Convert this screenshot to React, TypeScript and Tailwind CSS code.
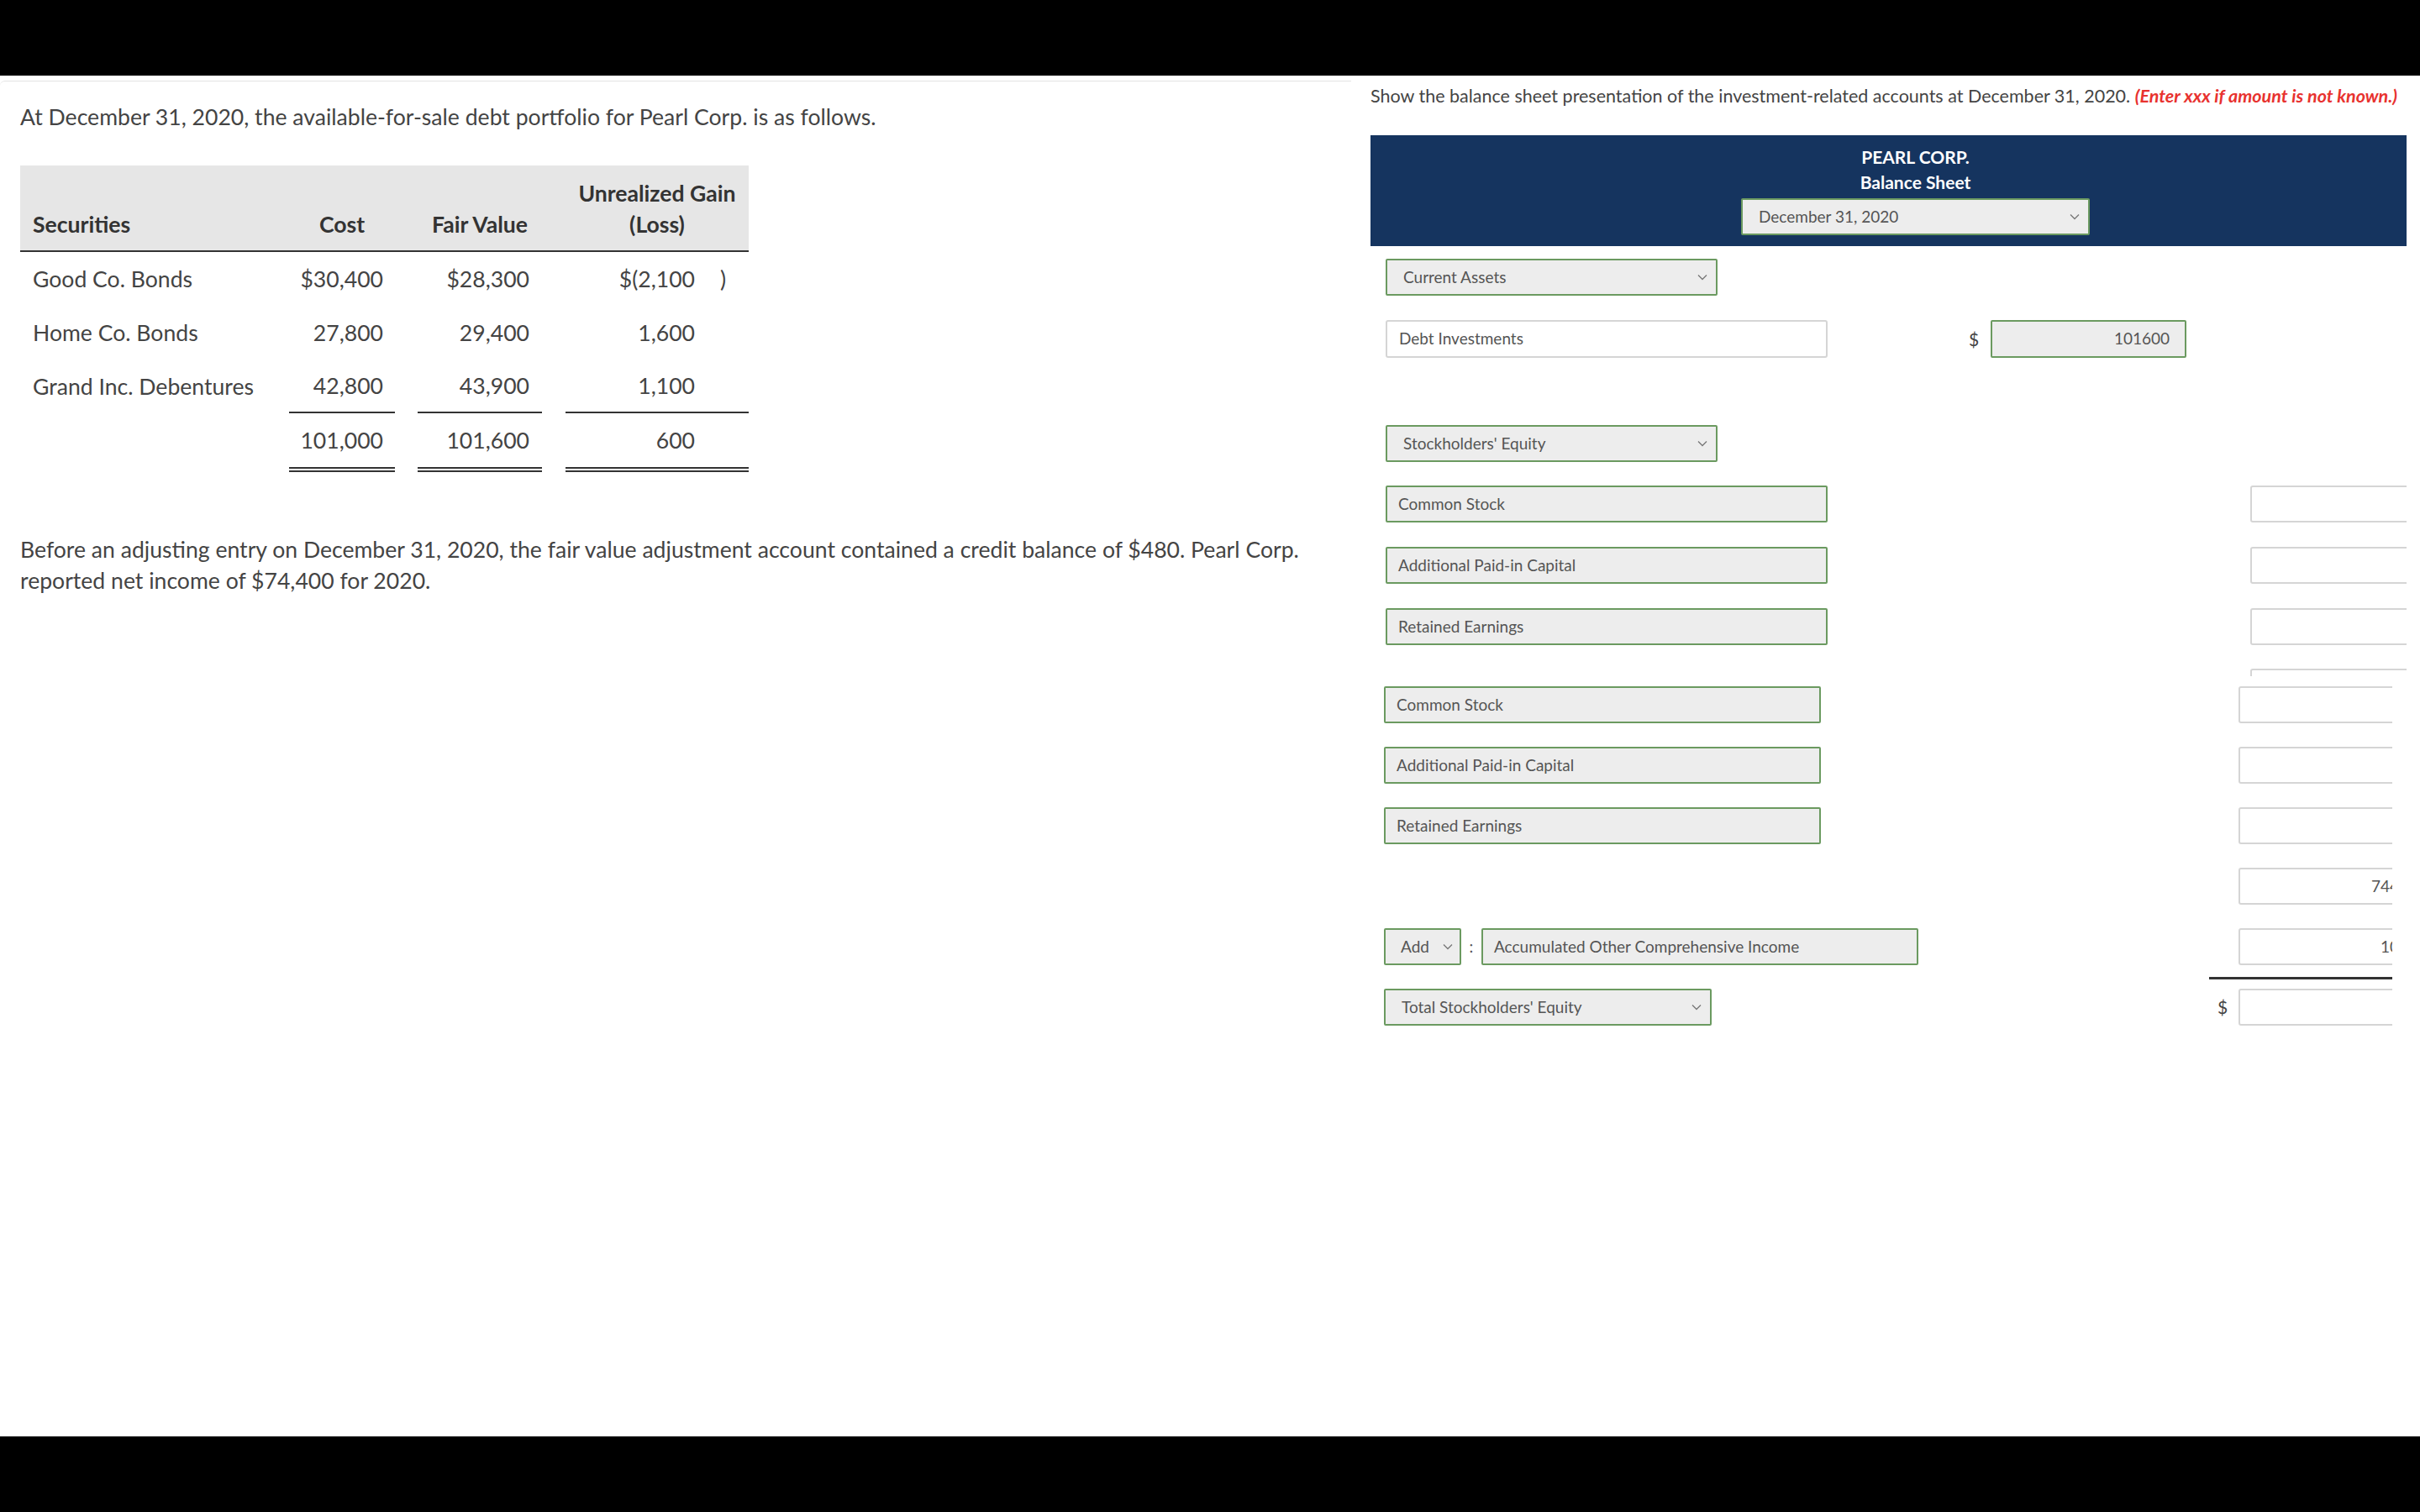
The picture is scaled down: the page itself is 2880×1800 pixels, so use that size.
import React from 'react'

const rows = [
  { name: 'Good Co. Bonds', cost: '$30,400', fair: '$28,300', gain: '$(2,100', paren: ')' },
  { name: 'Home Co. Bonds', cost: '27,800', fair: '29,400', gain: '1,600', paren: '' },
  { name: 'Grand Inc. Debentures', cost: '42,800', fair: '43,900', gain: '1,100', paren: '' },
]

function Chevron() {
  return (
    <svg width="12" height="8" viewBox="0 0 12 8" className="shrink-0">
      <polyline points="1,1.5 6,6.5 11,1.5" fill="none" stroke="#777" strokeWidth="1.3" />
    </svg>
  )
}

function Select({ label, className }: { label: string; className: string }) {
  return (
    <div className={`h-[44px] flex items-center justify-between pl-[19px] pr-[10px] bg-[#ededed] border-2 border-[#6b9a60] rounded-[2px] text-[19px] text-[#555] ${className}`}>
      <span>{label}</span>
      <Chevron />
    </div>
  )
}

function Label({ label, className }: { label: string; className: string }) {
  return (
    <div className={`h-[44px] flex items-center pl-[13px] bg-[#ededed] border-2 border-[#6b9a60] rounded-[2px] text-[19px] text-[#555] ${className}`}>
      {label}
    </div>
  )
}

function Amount({ value = '', className = '' }: { value?: string; className?: string }) {
  return (
    <div className={`h-[44px] w-[233px] shrink-0 flex items-center justify-end pr-[18px] bg-white border-2 border-[#d5d5d5] rounded-[3px] text-[19px] text-[#555] ${className}`}>
      {value}
    </div>
  )
}

function LeftPanel() {
  return (
    <div className="w-[1608px] shrink-0 mt-[6px] border-t border-[#e3e3e3] rounded-tl-[6px] pl-[24px] pt-[24px] text-[26.6px] leading-[37px] text-[#444]">
      <p>At December 31, 2020, the available-for-sale debt portfolio for Pearl Corp. is as follows.</p>

      <div className="mt-[39px] w-[867px]">
        <div className="grid grid-cols-[320px_126px_27px_148px_28px_218px] h-[103px] bg-[#e6e6e6] border-b-2 border-[#333] font-bold text-[#333] items-end pb-[12px]">
          <div className="pl-[15px]">Securities</div>
          <div className="text-center">Cost</div>
          <div />
          <div className="text-center">Fair Value</div>
          <div />
          <div className="text-center">Unrealized Gain<br />(Loss)</div>
        </div>

        {rows.map((r, i) => (
          <div key={r.name} className="grid grid-cols-[320px_126px_27px_148px_28px_218px] h-[64px]">
            <div className="pl-[15px] flex items-center whitespace-nowrap">{r.name}</div>
            <div className={`flex items-center justify-end pr-[14px] ${i === 2 ? 'border-b-2 border-[#333]' : ''}`}>{r.cost}</div>
            <div />
            <div className={`flex items-center justify-end pr-[15px] ${i === 2 ? 'border-b-2 border-[#333]' : ''}`}>{r.fair}</div>
            <div />
            <div className={`flex items-center justify-end pr-[27px] ${i === 2 ? 'border-b-2 border-[#333]' : ''}`}>
              <span>{r.gain}</span>
              <span className="w-[37px] text-right">{r.paren}</span>
            </div>
          </div>
        ))}

        <div className="grid grid-cols-[320px_126px_27px_148px_28px_218px] h-[70px]">
          <div />
          <div className="flex items-center justify-end pr-[14px] border-b-[6px] border-double border-[#333]">101,000</div>
          <div />
          <div className="flex items-center justify-end pr-[15px] border-b-[6px] border-double border-[#333]">101,600</div>
          <div />
          <div className="flex items-center justify-end pr-[64px] border-b-[6px] border-double border-[#333]">600</div>
        </div>
      </div>

      <p className="mt-[74px] pr-[24px]">
        Before an adjusting entry on December 31, 2020, the fair value adjustment account contained a credit balance of $480. Pearl Corp. reported net income of $74,400 for 2020.
      </p>
    </div>
  )
}

function RightPanel() {
  return (
    <div className="w-[1256px] shrink-0 pl-[23px] pt-[9px] overflow-hidden">
      <p className="text-[21.5px] leading-[30px] text-[#444] whitespace-nowrap">
        Show the balance sheet presentation of the investment-related accounts at December 31, 2020.{' '}
        <span className="font-bold italic text-[#e8322f]">(Enter xxx if amount is not known.)</span>
      </p>

      <div className="mt-[32px] w-[1233px] h-[132px] bg-[#15345f] pl-[64px] pt-[11px] flex flex-col items-center">
        <div className="text-white font-bold text-[21px] leading-[30px]">PEARL CORP.</div>
        <div className="text-white font-bold text-[21px] leading-[30px]">Balance Sheet</div>
        <Select label="December 31, 2020" className="w-[415px] mt-[4px]" />
      </div>

      {/* first block: assets and equity captions */}
      <div className="w-[1233px] h-[512px] overflow-hidden pl-[18px]">
        <Select label="Current Assets" className="w-[395px] mt-[15px]" />

        <div className="flex items-center mt-[29px]">
          <div className="h-[45px] w-[526px] shrink-0 flex items-center pl-[14px] bg-white border-2 border-[#d5d5d5] rounded-[3px] text-[19px] text-[#555]">
            Debt Investments
          </div>
          <span className="ml-[168px] w-[26px] shrink-0 text-[21px] text-[#444]">$</span>
          <div className="h-[45px] w-[233px] shrink-0 flex items-center justify-end pr-[18px] bg-[#ededed] border-2 border-[#6b9a60] rounded-[2px] text-[19px] text-[#555]">
            101600
          </div>
        </div>

        <Select label="Stockholders' Equity" className="w-[395px] mt-[80px]" />

        <div className="flex items-center mt-[28px]">
          <Label label="Common Stock" className="w-[526px] shrink-0" />
          <Amount className="ml-[503px]" />
        </div>
        <div className="flex items-center mt-[29px]">
          <Label label="Additional Paid-in Capital" className="w-[526px] shrink-0" />
          <Amount className="ml-[503px]" />
        </div>
        <div className="flex items-center mt-[29px]">
          <Label label="Retained Earnings" className="w-[526px] shrink-0" />
          <Amount className="ml-[503px]" />
        </div>
        <div className="flex items-center mt-[28px]">
          <div className="w-[526px] shrink-0" />
          <Amount className="ml-[503px]" />
        </div>
      </div>

      {/* second block */}
      <div className="w-[1216px] overflow-hidden pl-[16px] pt-[12px]">
        <div className="flex items-center">
          <Label label="Common Stock" className="w-[520px] shrink-0" />
          <Amount className="ml-[497px]" />
        </div>
        <div className="flex items-center mt-[28px]">
          <Label label="Additional Paid-in Capital" className="w-[520px] shrink-0" />
          <Amount className="ml-[497px]" />
        </div>
        <div className="flex items-center mt-[28px]">
          <Label label="Retained Earnings" className="w-[520px] shrink-0" />
          <Amount className="ml-[497px]" />
        </div>
        <div className="flex items-center mt-[28px]">
          <div className="w-[520px] shrink-0 h-[44px]" />
          <Amount value="74400" className="ml-[497px]" />
        </div>
        <div className="flex items-center mt-[28px]">
          <Select label="Add" className="w-[92px] shrink-0 pl-[18px]! pr-[8px]!" />
          <span className="w-[24px] shrink-0 text-center text-[19px] text-[#555]">:</span>
          <Label label="Accumulated Other Comprehensive Income" className="w-[520px] shrink-0" />
          <Amount value="1080" className="ml-[381px]" />
        </div>
        <div className="flex items-end mt-[14px]">
          <Select label="Total Stockholders' Equity" className="w-[390px] shrink-0" />
          <div className="ml-[592px] w-[300px] shrink-0 border-t-[3px] border-[#333] pt-[11px] flex items-center">
            <span className="w-[35px] shrink-0 pl-[10px] text-[21px] text-[#444]">$</span>
            <Amount />
          </div>
        </div>
      </div>
    </div>
  )
}

export default function App() {
  return (
    <div className="w-[2880px] h-[1800px] flex flex-col bg-black font-['Lato',sans-serif] overflow-hidden">
      <div className="h-[90px] shrink-0 bg-black" />
      <div className="h-[1620px] shrink-0 bg-white flex">
        <LeftPanel />
        <RightPanel />
      </div>
      <div className="h-[90px] shrink-0 bg-black" />
    </div>
  )
}
